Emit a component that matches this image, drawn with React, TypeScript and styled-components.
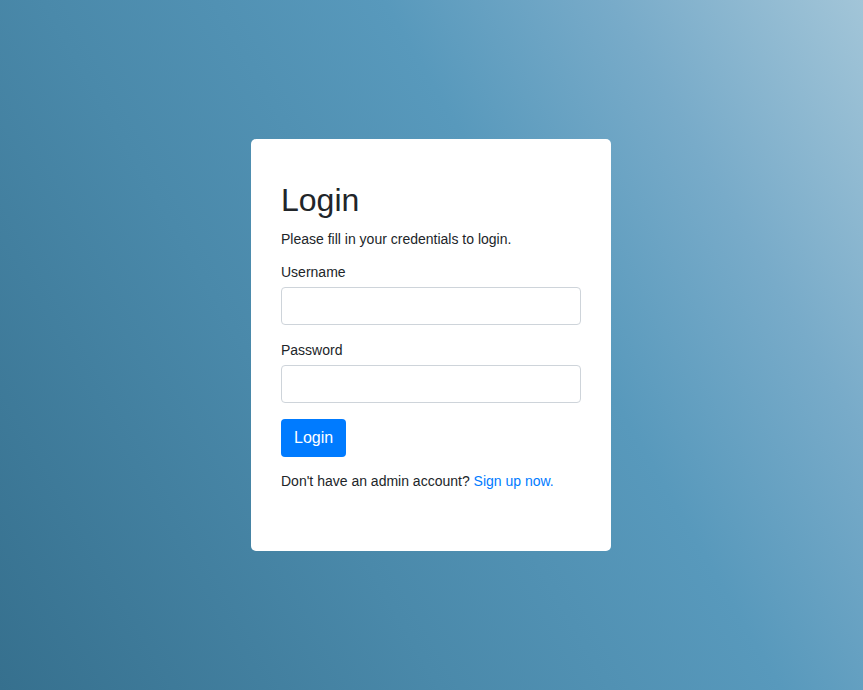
import React from 'react';
import styled, { createGlobalStyle } from 'styled-components';

const Global = createGlobalStyle`
    * { box-sizing: border-box; }
    html, body { margin: 0; padding: 0; height: 100%; }
    body {
        font-family: "Liberation Sans", Arial, sans-serif;
        font-size: 14px;
        color: #212529;
        background: #4a8bae;
    }
`
const Page = styled.main`
    width: 100%;
    min-height: 690px;
    display: flex;
    align-items: center;
    justify-content: center;
    padding-right: 1px;
    background: linear-gradient(60deg, #36708e 0%, #4a89aa 35%, #5899bc 62%, #78abc9 80%, #a2c5d8 100%);
`
const Card = styled.section`
    width: 360px;
    height: 412px;
    background-color: #fff;
    border-radius: 5px;
    padding: 43px 30px 30px;
`
const Title = styled.h2`
    margin: 0 0 10px;
    font-size: 32px;
    font-weight: 400;
    line-height: 1.15;
`
const Intro = styled.p`
    margin: 0 0 13px;
    line-height: 20px;
`
const Group = styled.div`
    margin-bottom: 15px;
`
const Label = styled.label`
    display: block;
    line-height: 20px;
    margin-bottom: 5px;
`
const Input = styled.input`
    display: block;
    width: 100%;
    height: 38px;
    border: 1px solid #ced4da;
    border-radius: 4px;
    outline: none;
    padding: 6px 12px;
    font: inherit;
`
const Button = styled.button`
    height: 38px;
    margin-top: 1px;
    padding: 0 13px;
    border: none;
    border-radius: 4px;
    background-color: #007bff;
    color: #fff;
    font-family: inherit;
    font-size: 16px;
    cursor: pointer;
`
const Footer = styled.p`
    margin: 14px 0 0;
    line-height: 20px;
    a {
        color: #007bff;
        text-decoration: none;
    }
`
export default function App() {
    return (
        <Page>
            <Global />
            <Card>
                <Title>Login</Title>
                <Intro>Please fill in your credentials to login.</Intro>
                <Group>
                    <Label>Username</Label>
                    <Input type="text" />
                </Group>
                <Group>
                    <Label>Password</Label>
                    <Input type="password" />
                </Group>
                <Button>Login</Button>
                <Footer>
                    Don't have an admin account? <a href="#">Sign up now.</a>
                </Footer>
            </Card>
        </Page>
    );
}
